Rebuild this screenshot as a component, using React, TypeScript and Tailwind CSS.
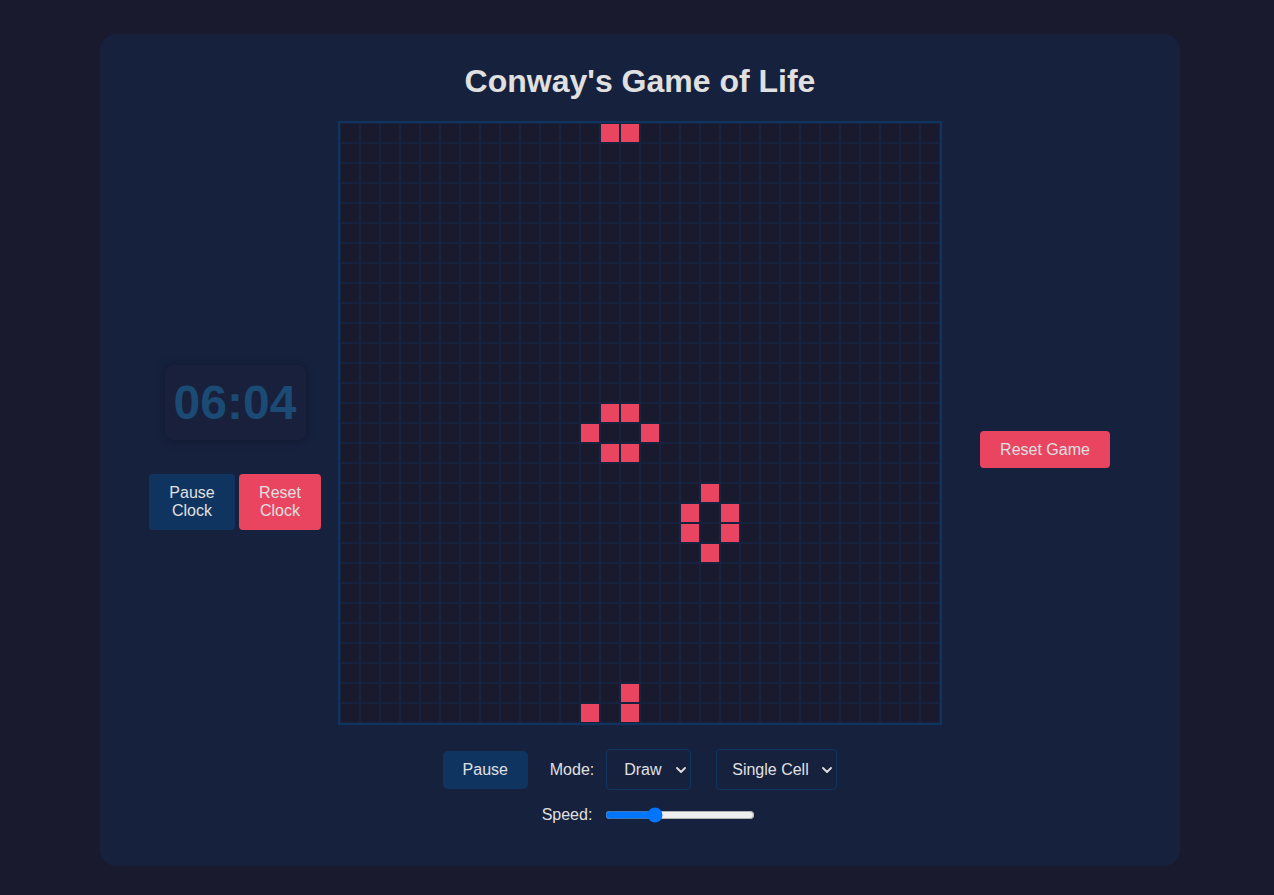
import React from "react";

const LIVE = new Set([
  "0,13", "0,14",
  "14,13", "14,14", "15,12", "15,15", "16,13", "16,14",
  "18,18", "19,17", "19,19", "20,17", "20,19", "21,18",
  "28,14", "29,12", "29,14",
]);

function Chevron() {
  return (
    <svg width="10" height="6" viewBox="0 0 10 6" className="pointer-events-none absolute right-[5px] top-1/2 -translate-y-1/2">
      <path d="M1 1 L5 5 L9 1" fill="none" stroke="#e0e0e0" strokeWidth="1.8" strokeLinecap="round" strokeLinejoin="round" />
    </svg>
  );
}

export default function App() {
  const cells = [];
  for (let r = 0; r < 30; r++) {
    for (let c = 0; c < 30; c++) {
      const alive = LIVE.has(`${r},${c}`);
      cells.push(
        <div
          key={`${r}-${c}`}
          className={
            alive
              ? "h-5 w-5 border border-[#17223f] bg-[#e94560]"
              : "h-5 w-5 border border-[#17223f]"
          }
        />
      );
    }
  }

  return (
    <div className="min-h-screen bg-[#1a1a2e] pt-[34px] font-['Liberation_Sans',Arial,sans-serif] text-[#e0e0e0]">
      <div className="ml-[100px] h-[832px] w-[1080px] rounded-2xl bg-[#16213e] pt-[29px]">
        <h1 className="mb-[21px] text-center text-[32px] font-bold leading-[37px] text-[#e0e0e0]">
          Conway's Game of Life
        </h1>

        <div className="flex items-start justify-center gap-4">
          <div className="mt-[244px] flex w-[174px] flex-col items-center">
            <div className="flex h-[75px] w-[141px] items-center justify-center rounded-lg bg-[#18203b] shadow-[0_0_10px_rgba(0,0,0,0.3)]">
              <span className="text-[48px] font-bold leading-none text-[#1b4a74]">06:04</span>
            </div>
            <div className="mt-[34px] flex gap-1">
              <button className="h-[56px] w-[86px] rounded-[4px] bg-[#0f3460] text-center text-[16px] leading-[18px] text-[#e0e0e0]">
                Pause
                <br />
                Clock
              </button>
              <button className="h-[56px] w-[82px] rounded-[4px] bg-[#e94560] text-center text-[16px] leading-[18px] text-[#e0e0e0]">
                Reset
                <br />
                Clock
              </button>
            </div>
          </div>

          <div className="grid grid-cols-[repeat(30,20px)] border-2 border-[#0f3460] bg-[#1a1a2e]">
            {cells}
          </div>

          <div className="mt-[310px] flex w-[174px] justify-center">
            <button className="h-[37px] w-[130px] rounded-[4px] bg-[#e94560] text-[16px] text-[#e0e0e0]">
              Reset Game
            </button>
          </div>
        </div>

        <div className="mt-[24px] flex h-[41px] items-center justify-center">
          <button className="h-[38px] w-[85px] rounded-[5px] bg-[#0f3460] text-[16px] text-[#e0e0e0]">
            Pause
          </button>
          <span className="ml-[22px] text-[16px] text-[#e0e0e0]">Mode:</span>
          <div className="relative ml-[12px] h-[41px] w-[85px]">
            <select className="h-full w-full appearance-none rounded-[4px] border border-[#0f3460] bg-[#16213e] pl-[17px] text-[16px] text-[#e0e0e0] outline-none">
              <option>Draw</option>
              <option>Erase</option>
            </select>
            <Chevron />
          </div>
          <div className="relative ml-[25px] h-[41px] w-[121px]">
            <select className="h-full w-full appearance-none rounded-[4px] border border-[#0f3460] bg-[#16213e] pl-[15px] text-[16px] text-[#e0e0e0] outline-none">
              <option>Single Cell</option>
              <option>Glider</option>
            </select>
            <Chevron />
          </div>
        </div>

        <div className="mt-[16px] flex h-[18px] items-center justify-center pl-[17px]">
          <span className="text-[16px] text-[#e0e0e0]">Speed:</span>
          <input type="range" min={0} max={100} defaultValue={31} className="ml-[13px] w-[150px]" />
        </div>
      </div>
    </div>
  );
}
